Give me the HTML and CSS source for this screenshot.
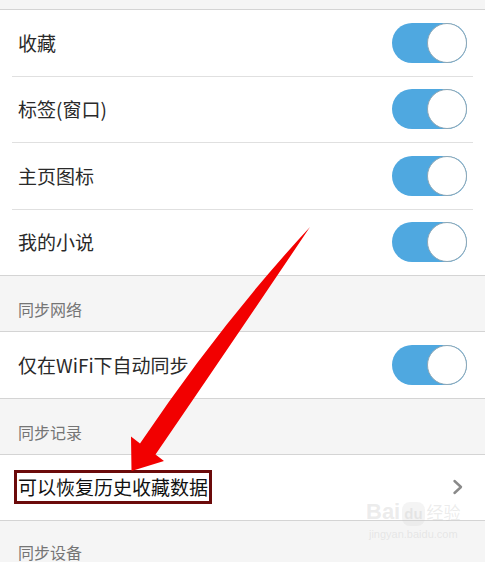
FILE: index.html
```html
<!DOCTYPE html>
<html lang="zh-CN">
<head>
    <meta charset="UTF-8">
    <meta name="viewport" content="width=device-width, initial-scale=1.0">
    <title>同步设置</title>
    <link rel="stylesheet" href="styles.css">
</head>
<body>
    <div class="screen">
        <div class="top-gap"></div>

        <div class="group">
            <div class="row">
                <span class="label">收藏</span>
                <span class="switch on"></span>
            </div>
            <div class="row">
                <span class="label">标签(窗口)</span>
                <span class="switch on"></span>
            </div>
            <div class="row">
                <span class="label">主页图标</span>
                <span class="switch on"></span>
            </div>
            <div class="row">
                <span class="label">我的小说</span>
                <span class="switch on"></span>
            </div>
        </div>

        <div class="section-title">同步网络</div>
        <div class="group">
            <div class="row">
                <span class="label">仅在WiFi下自动同步</span>
                <span class="switch on"></span>
            </div>
        </div>

        <div class="section-title">同步记录</div>
        <div class="group">
            <div class="row">
                <span class="label marked">可以恢复历史收藏数据</span>
                <svg class="chevron" width="12" height="16" viewBox="0 0 12 16">
                    <path d="M2.5 2 L9 8 L2.5 14" fill="none" stroke="#8a8a8a" stroke-width="2.4" stroke-linecap="round" stroke-linejoin="round"/>
                </svg>
            </div>
        </div>

        <div class="section-title last">同步设备</div>

        <!-- annotation arrow drawn over the page -->
        <svg class="arrow" width="485" height="562" viewBox="0 0 485 562">
            <path d="M310 227 Q236 337 155.5 454.5 L164 461 L131.5 471 L131 436.5 L140 443.5 Q222 322 310 227 Z" fill="#f20000"/>
        </svg>

        <div class="watermark">
            <div class="wm-logo">Bai<span class="wm-du">du</span><span class="wm-cn">经验</span></div>
            <div class="wm-url">jingyan.baidu.com</div>
        </div>
    </div>
</body>
</html>
```

FILE: styles.css
```css
body {
    margin: 0;
    background-color: #f5f5f5;
    font-family: "Noto Sans CJK SC", "Noto Sans", sans-serif;
    color: #2a2a2a;
}
.screen {
    position: relative;
    width: 485px;
    height: 562px;
    overflow: hidden;
}
.top-gap {
    height: 9px;
}
.group {
    background-color: white;
    border-top: 1px solid #d4d4d4;
    border-bottom: 1px solid #d4d4d4;
}
.row {
    display: flex;
    align-items: center;
    justify-content: space-between;
    height: 65.5px;
    margin: 0 12px;
    padding: 0 6px;
}
.row + .row {
    border-top: 1px solid #e0e0e0;
}
.label {
    font-size: 19px;
    line-height: 28px;
}
.marked {
    margin-left: -4px;
    padding: 0 1px;
    border: 3px solid #6b0a0a;
    color: #111;
}
.switch {
    position: relative;
    width: 75px;
    height: 40px;
    border-radius: 20px;
    background-color: #cfcfcf;
}
.switch.on {
    background-color: #4fa8e0;
}
.switch::after {
    content: "";
    position: absolute;
    top: 0;
    left: 0;
    width: 40px;
    height: 40px;
    box-sizing: border-box;
    border-radius: 50%;
    background-color: white;
    border: 1.5px solid #8ea7b5;
}
.switch.on::after {
    left: auto;
    right: 0;
}
.chevron {
    margin-right: 3px;
}
.section-title {
    padding: 24px 18px 0;
    height: 31px;
    font-size: 16px;
    line-height: 18px;
    color: #757575;
}
.section-title.last {
    padding-top: 22px;
}
.arrow {
    position: absolute;
    top: 0;
    left: 0;
}
.watermark {
    position: absolute;
    left: 366px;
    top: 500px;
    color: rgba(200, 200, 200, 0.35);
    font-family: "Liberation Sans", sans-serif;
    text-align: center;
}
.wm-logo {
    font-size: 22px;
    font-weight: bold;
    line-height: 24px;
}
.wm-du {
    display: inline-block;
    margin: 0 2px;
    padding: 0 2px;
    font-size: 15px;
    border-radius: 8px;
    background-color: rgba(200, 200, 200, 0.2);
}
.wm-cn {
    font-family: "Noto Sans CJK SC", sans-serif;
    font-size: 17px;
    font-weight: normal;
}
.wm-url {
    font-size: 11px;
    line-height: 16px;
}
```
